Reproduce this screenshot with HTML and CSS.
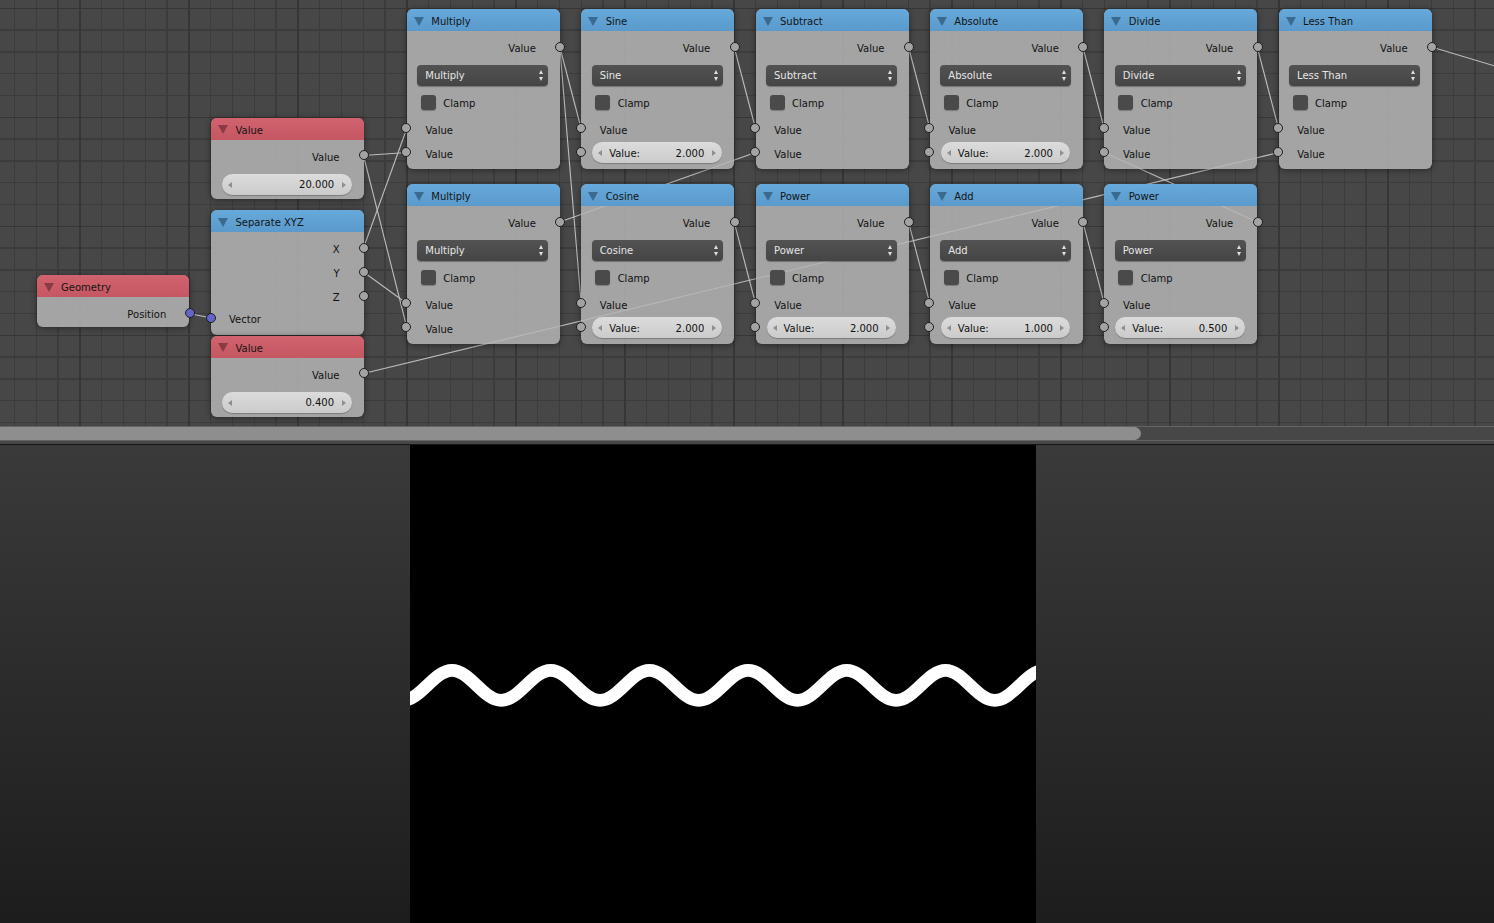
FILE: index.html
```html
<!DOCTYPE html>
<html>
<head>
<meta charset="utf-8">
<title>Node Editor</title>
<link rel="stylesheet" href="styles.css">
</head>
<body>
<div class="app">
  <div class="editor">
    <svg class="links" width="1494" height="426" viewBox="0 0 1494 426">
      <line x1="189.3" y1="313.5" x2="211" y2="318"/>
      <line x1="363.5" y1="248" x2="406.8" y2="128.5"/>
      <line x1="363.5" y1="155.5" x2="406.8" y2="152.5"/>
      <line x1="363.5" y1="272" x2="406.8" y2="303.5"/>
      <line x1="363.5" y1="155.5" x2="406.8" y2="327.5"/>
      <line x1="559.8" y1="47" x2="581.15" y2="128.5"/>
      <line x1="559.8" y1="47" x2="581.15" y2="303.5"/>
      <line x1="734.15" y1="47" x2="755.5" y2="128.5"/>
      <line x1="559.8" y1="222" x2="755.5" y2="152.5"/>
      <line x1="734.15" y1="222" x2="755.5" y2="303.5"/>
      <line x1="908.5" y1="47" x2="929.85" y2="128.5"/>
      <line x1="908.5" y1="222" x2="929.85" y2="303.5"/>
      <line x1="1082.85" y1="47" x2="1104.2" y2="128.5"/>
      <line x1="1082.85" y1="222" x2="1104.2" y2="303.5"/>
      <line x1="1257.2" y1="222" x2="1104.2" y2="152.5"/>
      <line x1="1257.2" y1="47" x2="1278.55" y2="128.5"/>
      <line x1="363.5" y1="373.5" x2="1278.55" y2="152.5"/>
      <line x1="1431.55" y1="47" x2="1560" y2="85.5"/>
    </svg>

    <!-- Input nodes -->
    <div class="node red val20">
      <div class="hdr"><i class="tri"></i>Value</div>
      <div class="row out">Value<i class="sock"></i></div>
      <div class="row frow"><div class="field"><i class="arr l"></i><span class="num">20.000</span><i class="arr r"></i></div></div>
    </div>

    <div class="node blue sepxyz">
      <div class="hdr"><i class="tri"></i>Separate XYZ</div>
      <div class="row out">X<i class="sock"></i></div>
      <div class="row out">Y<i class="sock"></i></div>
      <div class="row out">Z<i class="sock"></i></div>
      <div class="row in vec"><i class="sock vsock"></i>Vector</div>
    </div>

    <div class="node red geom">
      <div class="hdr"><i class="tri"></i>Geometry</div>
      <div class="row out">Position<i class="sock vsock"></i></div>
    </div>

    <div class="node red val04">
      <div class="hdr"><i class="tri"></i>Value</div>
      <div class="row out">Value<i class="sock"></i></div>
      <div class="row frow"><div class="field"><i class="arr l"></i><span class="num">0.400</span><i class="arr r"></i></div></div>
    </div>

    <!-- Row 1 math nodes -->
    <div class="node blue math c0 r1">
      <div class="hdr"><i class="tri"></i>Multiply</div>
      <div class="row out">Value<i class="sock"></i></div>
      <div class="row sel"><div class="menu">Multiply<i class="ud"></i></div></div>
      <div class="row chkrow"><i class="chk"></i>Clamp</div>
      <div class="row in in1"><i class="sock"></i>Value</div>
      <div class="row in"><i class="sock"></i>Value</div>
    </div>
    <div class="node blue math c1 r1">
      <div class="hdr"><i class="tri"></i>Sine</div>
      <div class="row out">Value<i class="sock"></i></div>
      <div class="row sel"><div class="menu">Sine<i class="ud"></i></div></div>
      <div class="row chkrow"><i class="chk"></i>Clamp</div>
      <div class="row in in1"><i class="sock"></i>Value</div>
      <div class="row fin"><i class="sock"></i><div class="field"><i class="arr l"></i><span class="lab">Value:</span><span class="num">2.000</span><i class="arr r"></i></div></div>
    </div>
    <div class="node blue math c2 r1">
      <div class="hdr"><i class="tri"></i>Subtract</div>
      <div class="row out">Value<i class="sock"></i></div>
      <div class="row sel"><div class="menu">Subtract<i class="ud"></i></div></div>
      <div class="row chkrow"><i class="chk"></i>Clamp</div>
      <div class="row in in1"><i class="sock"></i>Value</div>
      <div class="row in"><i class="sock"></i>Value</div>
    </div>
    <div class="node blue math c3 r1">
      <div class="hdr"><i class="tri"></i>Absolute</div>
      <div class="row out">Value<i class="sock"></i></div>
      <div class="row sel"><div class="menu">Absolute<i class="ud"></i></div></div>
      <div class="row chkrow"><i class="chk"></i>Clamp</div>
      <div class="row in in1"><i class="sock"></i>Value</div>
      <div class="row fin"><i class="sock"></i><div class="field"><i class="arr l"></i><span class="lab">Value:</span><span class="num">2.000</span><i class="arr r"></i></div></div>
    </div>
    <div class="node blue math c4 r1">
      <div class="hdr"><i class="tri"></i>Divide</div>
      <div class="row out">Value<i class="sock"></i></div>
      <div class="row sel"><div class="menu">Divide<i class="ud"></i></div></div>
      <div class="row chkrow"><i class="chk"></i>Clamp</div>
      <div class="row in in1"><i class="sock"></i>Value</div>
      <div class="row in"><i class="sock"></i>Value</div>
    </div>
    <div class="node blue math c5 r1">
      <div class="hdr"><i class="tri"></i>Less Than</div>
      <div class="row out">Value<i class="sock"></i></div>
      <div class="row sel"><div class="menu">Less Than<i class="ud"></i></div></div>
      <div class="row chkrow"><i class="chk"></i>Clamp</div>
      <div class="row in in1"><i class="sock"></i>Value</div>
      <div class="row in"><i class="sock"></i>Value</div>
    </div>

    <!-- Row 2 math nodes -->
    <div class="node blue math c0 r2">
      <div class="hdr"><i class="tri"></i>Multiply</div>
      <div class="row out">Value<i class="sock"></i></div>
      <div class="row sel"><div class="menu">Multiply<i class="ud"></i></div></div>
      <div class="row chkrow"><i class="chk"></i>Clamp</div>
      <div class="row in in1"><i class="sock"></i>Value</div>
      <div class="row in"><i class="sock"></i>Value</div>
    </div>
    <div class="node blue math c1 r2">
      <div class="hdr"><i class="tri"></i>Cosine</div>
      <div class="row out">Value<i class="sock"></i></div>
      <div class="row sel"><div class="menu">Cosine<i class="ud"></i></div></div>
      <div class="row chkrow"><i class="chk"></i>Clamp</div>
      <div class="row in in1"><i class="sock"></i>Value</div>
      <div class="row fin"><i class="sock"></i><div class="field"><i class="arr l"></i><span class="lab">Value:</span><span class="num">2.000</span><i class="arr r"></i></div></div>
    </div>
    <div class="node blue math c2 r2">
      <div class="hdr"><i class="tri"></i>Power</div>
      <div class="row out">Value<i class="sock"></i></div>
      <div class="row sel"><div class="menu">Power<i class="ud"></i></div></div>
      <div class="row chkrow"><i class="chk"></i>Clamp</div>
      <div class="row in in1"><i class="sock"></i>Value</div>
      <div class="row fin"><i class="sock"></i><div class="field"><i class="arr l"></i><span class="lab">Value:</span><span class="num">2.000</span><i class="arr r"></i></div></div>
    </div>
    <div class="node blue math c3 r2">
      <div class="hdr"><i class="tri"></i>Add</div>
      <div class="row out">Value<i class="sock"></i></div>
      <div class="row sel"><div class="menu">Add<i class="ud"></i></div></div>
      <div class="row chkrow"><i class="chk"></i>Clamp</div>
      <div class="row in in1"><i class="sock"></i>Value</div>
      <div class="row fin"><i class="sock"></i><div class="field"><i class="arr l"></i><span class="lab">Value:</span><span class="num">1.000</span><i class="arr r"></i></div></div>
    </div>
    <div class="node blue math c4 r2">
      <div class="hdr"><i class="tri"></i>Power</div>
      <div class="row out">Value<i class="sock"></i></div>
      <div class="row sel"><div class="menu">Power<i class="ud"></i></div></div>
      <div class="row chkrow"><i class="chk"></i>Clamp</div>
      <div class="row in in1"><i class="sock"></i>Value</div>
      <div class="row fin"><i class="sock"></i><div class="field"><i class="arr l"></i><span class="lab">Value:</span><span class="num">0.500</span><i class="arr r"></i></div></div>
    </div>
  </div>

  <div class="hscroll">
    <div class="track"><div class="thumb"></div></div>
  </div>
  <div class="sep"></div>

  <div class="viewer">
    <div class="image">
      <svg class="wave" width="626" height="478" viewBox="0 0 626 478">
        <path d="M-7.35,255.35 c8.93,0 16.628,-7.316 24.675,-15
          s15.745,-15 24.675,-15 s16.628,7.316 24.675,15 s15.745,15 24.675,15 s16.628,-7.316 24.675,-15
          s15.745,-15 24.675,-15 s16.628,7.316 24.675,15 s15.745,15 24.675,15 s16.628,-7.316 24.675,-15
          s15.745,-15 24.675,-15 s16.628,7.316 24.675,15 s15.745,15 24.675,15 s16.628,-7.316 24.675,-15
          s15.745,-15 24.675,-15 s16.628,7.316 24.675,15 s15.745,15 24.675,15 s16.628,-7.316 24.675,-15
          s15.745,-15 24.675,-15 s16.628,7.316 24.675,15 s15.745,15 24.675,15 s16.628,-7.316 24.675,-15
          s15.745,-15 24.675,-15 s16.628,7.316 24.675,15 s15.745,15 24.675,15 s16.628,-7.316 24.675,-15
          s15.745,-15 24.675,-15 s16.628,7.316 24.675,15 s15.745,15 24.675,15 s16.628,-7.316 24.675,-15"/>
      </svg>
    </div>
  </div>
</div>
</body>
</html>
```

FILE: styles.css
```css
* { box-sizing: border-box; }
html, body { margin: 0; padding: 0; }
body {
  width: 1494px;
  height: 923px;
  overflow: hidden;
  background: #1e1e1e;
  font-family: "DejaVu Sans", "Liberation Sans", sans-serif;
  font-size: 10px;
  color: #111;
}
.app { display: flex; flex-direction: column; height: 923px; }

/* ---------- node editor ---------- */
.editor {
  position: relative;
  height: 426px;
  flex: none;
  overflow: hidden;
  background-color: #474747;
  background-image:
    repeating-linear-gradient(90deg, transparent 0 79.4px, #363636 79.4px 80.8px, transparent 80.8px 109px),
    repeating-linear-gradient(180deg, transparent 0 7.6px, #363636 7.6px 9px, transparent 9px 109px),
    repeating-linear-gradient(90deg, transparent 0 13.8px, #3c3c3c 13.8px 15.1px, transparent 15.1px 21.8px),
    repeating-linear-gradient(180deg, transparent 0 7.6px, #3c3c3c 7.6px 8.9px, transparent 8.9px 21.8px);
}
.links { position: absolute; left: 0; top: 0; z-index: 0; }
.links line { stroke: #bdbdbd; stroke-width: 1.1; }

.node {
  position: absolute;
  z-index: 1;
  width: 153px;
  border-radius: 6px;
  background: rgba(181, 181, 181, 0.85);
  box-shadow: 0 1px 6px rgba(0, 0, 0, 0.45);
  padding-bottom: 4.5px;
}
.hdr {
  position: relative;
  height: 22px;
  line-height: 25px;
  padding-left: 24.5px;
  border-radius: 6px 6px 0 0;
  color: #141414;
  white-space: nowrap;
}
.blue .hdr { background: linear-gradient(rgba(92, 170, 227, 0.86), rgba(78, 152, 210, 0.86)); }
.red .hdr { background: linear-gradient(rgba(217, 88, 101, 0.86), rgba(201, 74, 87, 0.86)); }
.tri {
  position: absolute;
  left: 7px;
  top: 7.5px;
  width: 0; height: 0;
  border-left: 5px solid transparent;
  border-right: 5px solid transparent;
  border-top: 9px solid #3b6a90;
}
.red .tri { border-top-color: #8a3a44; }

.row {
  position: relative;
  display: flex;
  align-items: center;
  height: 24px;
  padding: 0 24px 0 18.7px;
  white-space: nowrap;
}
.row.out { justify-content: flex-end; padding-top: 3px; }
.row.in { padding-top: 3px; }
.hdr + .row { margin-top: 4px; }
.sel { margin-top: 4.5px; padding: 0 11.5px 0 10.5px; }
.chkrow { margin-top: 3px; padding-left: 14px; padding-top: 1px; }
.in1 { margin-top: 2px; }
.frow { margin-top: 4.5px; padding: 0 12px 0 10.7px; }
.fin { padding: 0 12.5px 0 11px; }

.sock {
  position: absolute;
  top: 50%;
  width: 10px;
  height: 10px;
  margin-top: -5.5px;
  border-radius: 50%;
  background: #a3a3a3;
  border: 1px solid #1e1e1e;
}
.out .sock { right: -5.5px; }
.in .sock, .fin .sock { left: -5.5px; }
.vsock { background: #6464c8; }

.menu {
  position: relative;
  flex: 1;
  height: 21px;
  line-height: 22px;
  padding-left: 8px;
  border-radius: 4px;
  background: linear-gradient(#525252, #454545);
  box-shadow: 0 1px 1px rgba(0, 0, 0, 0.3);
  color: #e6e6e6;
}
.ud {
  position: absolute;
  right: 4px;
  top: 5px;
  width: 5px;
  height: 11px;
}
.ud::before, .ud::after {
  content: "";
  position: absolute;
  left: 0;
  width: 0; height: 0;
  border-left: 2.5px solid transparent;
  border-right: 2.5px solid transparent;
}
.ud::before { top: 0; border-bottom: 4px solid #e0e0e0; }
.ud::after { bottom: 0; border-top: 4px solid #e0e0e0; }

.chk {
  width: 15px;
  height: 15px;
  margin-right: 7.5px;
  margin-top: -1px;
  border-radius: 3px;
  background: #4a4a4a;
  box-shadow: 0 1px 1px rgba(0, 0, 0, 0.25);
}

.field {
  display: flex;
  align-items: center;
  flex: 1;
  height: 21px;
  padding: 1px 6px 0;
  border-radius: 10.5px;
  background: linear-gradient(#dcdcdc, #cbcbcb);
  box-shadow: 0 1px 1px rgba(0, 0, 0, 0.25);
  color: #111;
}
.arr { width: 0; height: 0; border-top: 3px solid transparent; border-bottom: 3px solid transparent; }
.arr.l { border-right: 4px solid #8e8e8e; }
.arr.r { border-left: 4px solid #8e8e8e; }
.lab { margin-left: 7px; }
.num { margin-left: auto; margin-right: 7.4px; }

/* node placement on canvas */
.c0 { left: 406.8px; }
.c1 { left: 581.15px; }
.c2 { left: 755.5px; }
.c3 { left: 929.85px; }
.c4 { left: 1104.2px; }
.c5 { left: 1278.55px; }
.r1 { top: 9px; }
.r2 { top: 184px; }

.val20 { left: 211px; top: 117.5px; width: 152.5px; padding-bottom: 2.5px; }
.sepxyz { left: 211px; top: 210px; width: 152.5px; padding-bottom: 5px; }
.sepxyz .vec { margin-top: -2px; padding-left: 18px; }
.geom { left: 36.6px; top: 275px; width: 152.7px; padding-bottom: 1.7px; }
.geom .out { padding-right: 23px; }
.val04 { left: 211px; top: 335.5px; width: 152.5px; padding-bottom: 2.5px; }

/* ---------- scrollbar ---------- */
.hscroll {
  flex: none;
  height: 18px;
  background: #474747;
}
.track {
  height: 15px;
  border-top: 1px solid #646464;
  border-bottom: 1px solid #646464;
}
.thumb {
  width: 1141px;
  height: 13px;
  background: #8e8e8e;
  border-radius: 0 7px 7px 0;
}
.sep { flex: none; height: 1px; background: #151515; }

/* ---------- image viewer ---------- */
.viewer {
  flex: 1;
  background: linear-gradient(#3a3a3a, #1d1d1d);
}
.image {
  width: 626px;
  height: 100%;
  margin-left: 410px;
  background: #000;
  overflow: hidden;
}
.wave { display: block; }
.wave path { fill: none; stroke: #fff; stroke-width: 12.6; }
```
